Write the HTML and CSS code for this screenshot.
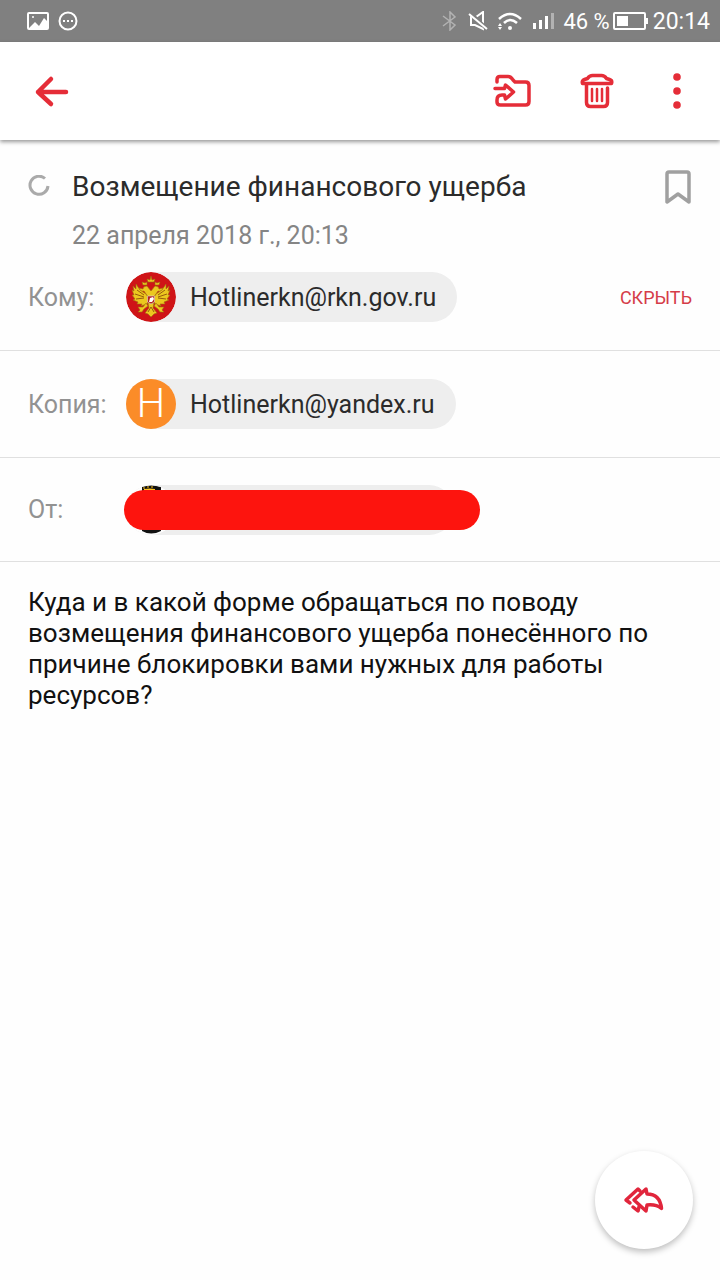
FILE: index.html
```html
<!DOCTYPE html>
<html lang="ru">
<head>
  <meta charset="UTF-8">
  <meta name="viewport" content="width=device-width, initial-scale=1.0">
  <title>Возмещение финансового ущерба</title>
  <link rel="stylesheet" href="styles.css">
</head>
<body>
  <div class="status-bar">
    <svg width="22" height="20" viewBox="0 0 22 20" fill="none" stroke="#fff" stroke-width="2">
      <rect x="1" y="2" width="20" height="16" rx="1"/>
      <path d="M2 17l6-6 4 4 5-8 4 4v6z" fill="#fff" stroke="none"/>
      <circle cx="6" cy="6" r="1" fill="#fff" stroke="none"/>
    </svg>
    <svg class="chat-icon" width="20" height="20" viewBox="0 0 20 20" fill="none" stroke="#fff" stroke-width="2">
      <circle cx="10" cy="10" r="8.5"/>
      <path d="M5 10h2M9 10h2M13 10h2"/>
    </svg>
    <div class="status-right">
      <svg width="16" height="20" viewBox="0 0 16 20" fill="none" stroke="#b2b2b2" stroke-width="1.5">
        <path d="M1 5l12 9-5 5V1l5 5-12 9"/>
      </svg>
      <svg class="mute-icon" width="20" height="20" viewBox="0 0 20 20" fill="none" stroke="#fff" stroke-width="2">
        <path d="M8 6l7-5v17l-8-4H3V5"/>
        <path d="M1 1l18 17" stroke="#808080" stroke-width="4"/>
        <path d="M1 3l18 15"/>
      </svg>
      <svg class="wifi-icon" width="26" height="20" viewBox="0 0 26 20" fill="none" stroke="#fff" stroke-width="2.5">
        <path d="M2 8q11-10 22 0M7 12q6-6 13 0"/>
        <circle cx="13" cy="17" r="2" fill="#fff" stroke="none"/>
        <path d="M1 15l2-3 2 3zM1 16l2 3 2-3z" fill="#fff" stroke="none"/>
      </svg>
      <svg class="signal-icon" width="22" height="18" viewBox="0 0 22 18" fill="#fff">
        <path d="M0 11h3v6H0zM6 8h3v9H6zM12 4h3v13h-3z"/>
        <path d="M18 1h3v16h-3z" fill="#b2b2b2"/>
      </svg>
      <span class="percent">46 %</span>
      <svg width="36" height="18" viewBox="0 0 36 18" fill="none" stroke="#fff" stroke-width="2">
        <rect x="1" y="1" width="31" height="16" rx="1"/>
        <path d="M4 4h11v10H4zM33 6h2v6h-2z" fill="#fff" stroke="none"/>
      </svg>
      <span class="clock">20:14</span>
    </div>
  </div>

  <header class="toolbar">
    <button type="button" class="icon-btn" aria-label="Назад">
      <svg width="40" height="40" viewBox="0 0 40 40" fill="none" stroke="#e52d38" stroke-width="4.5" stroke-linecap="round" stroke-linejoin="round">
        <path d="M34 21H6M19 8L6 21l13 12"/>
      </svg>
    </button>
    <div class="toolbar-actions">
      <button type="button" class="icon-btn" aria-label="Переместить в папку">
        <svg width="40" height="40" viewBox="0 0 40 40" fill="none" stroke="#e52d38" stroke-width="3.5" stroke-linecap="round" stroke-linejoin="round">
          <path d="M6 11V8.500q0-3 3-3h8q3 0 5 3.500l2 2h10.500q3.500 0 3.500 3.500v16q0 3.500-3.500 3.500H9.500Q6 34 6 31v-2q0-5 5-5h2.500l1 4 8-7-8-7-1 3.500H4"/>
        </svg>
      </button>
      <button type="button" class="icon-btn" aria-label="Удалить">
        <svg width="40" height="40" viewBox="0 0 40 40" fill="none" stroke="#e52d38" stroke-width="3.5" stroke-linecap="round" stroke-linejoin="round">
          <path d="M8.500 12.500q-1-3 2-4l3-1q2-3 5-3h9q3 0 5 3l3 1q3 1 2 4z"/>
          <path d="M12.500 13v18.500q0 4 4 4h13q4 0 4-4V17"/>
          <path d="M18 18v12M23 18v12M28 18v12" stroke-width="2.5"/>
        </svg>
      </button>
      <button type="button" class="icon-btn" aria-label="Ещё">
        <svg width="40" height="40" viewBox="0 0 40 40" fill="#e52d38">
          <circle cx="20" cy="6" r="3.800"/><circle cx="20" cy="20" r="3.800"/><circle cx="20" cy="34" r="3.800"/>
        </svg>
      </button>
    </div>
  </header>

  <main>
    <section class="subject">
      <svg class="spinner" width="22" height="22" viewBox="0 0 22 22" fill="none" stroke="#aaa" stroke-width="3">
        <path d="M17 3.500A9 9 0 1 0 20 11"/>
      </svg>
      <div class="subject-text">
        <h1>Возмещение финансового ущерба</h1>
        <p class="date">22 апреля 2018 г., 20:13</p>
      </div>
      <button type="button" class="icon-btn" aria-label="Отметить">
        <svg width="28" height="36" viewBox="0 0 28 36" fill="none" stroke="#a0a0a0" stroke-width="3.5" stroke-linejoin="round">
          <path d="M3 5q0-2 2-2h18q2 0 2 2v28l-11-8-11 8z"/>
        </svg>
      </button>
    </section>

    <div class="row row-to">
      <span class="label">Кому:</span>
      <span class="chip">
        <svg class="avatar" viewBox="0 0 50 50">
          <circle cx="25" cy="25" r="25" fill="#cf1417"/>
          <g fill="#ecc81f" stroke="#a06c12" stroke-width=".6">
            <path d="M22 25L18 19q-4 1-5-3l4 1q0-3 4-3l4 5 4-5q4 0 4 3l4-1q-1 4-5 3l-4 6z"/>
            <path d="M20 22l-6-4-4-6 0 5-3-3 1 5-2-1 2 5-2 0 3 4-2 1 5 2-1 2 5 0-1 2 6-2 2-5z"/>
            <path d="M30 22l6-4 4-6 0 5 3-3-1 5 2-1-2 5 2 0-3 4 2 1-5 2 1 2-5 0 1 2-6-2-2-5z"/>
            <path d="M20 31l-3 4-5 0 2 3-2 2h4l2-3 4-3zM30 31l3 4 5 0-2 3 2 2h-4l-2-3-4-3z"/>
            <path d="M22 31h6l-1 5 4 5-3 1-3 3-3-3-3-1 4-5z"/>
            <path d="M22 10l-1-3 3 1 1-4 1 4 3-1-1 3zM17 13l-1-3 3 1 2-1v3zM29 13v-3l2 1 3-1-1 3z"/>
          </g>
          <path d="M11 18l7 5M9 22l9 3M10 27l8-1M39 18l-7 5M41 22l-9 3M40 27l-8-1M22 40l3-5 3 5" fill="none" stroke="#985b0d"/>
          <path d="M21.500 24h7v6l-3.500 2-3.500-2z" fill="#b6251e" stroke="#ddd" stroke-width=".6"/>
          <path d="M23 30l1-4 3-1 1 2-2 3z" fill="#fff"/>
        </svg>
        <span>Hotlinerkn@rkn.gov.ru</span>
      </span>
      <button type="button" class="hide-btn">СКРЫТЬ</button>
    </div>

    <div class="row">
      <span class="label">Копия:</span>
      <span class="chip">
        <span class="avatar letter">H</span>
        <span>Hotlinerkn@yandex.ru</span>
      </span>
    </div>

    <div class="row row-from">
      <span class="label">От:</span>
      <span class="chip chip-hidden">
        <svg class="avatar" viewBox="0 0 50 50">
          <circle cx="25" cy="25" r="25" fill="#fefefe"/>
          <path d="M16 2q9-3 19 0v6H16z" fill="#111"/>
          <path d="M18 4q6-1 11 0v3H18z" fill="#ffc321"/>
          <path d="M18 2v2M22 1v2M26 1v2" stroke="#ffc321"/>
          <path d="M16 42h19v4q-10 5-19 0z" fill="#111"/>
        </svg>
        <span class="redaction"></span>
      </span>
    </div>

    <p class="message">Куда и в какой форме обращаться по поводу возмещения финансового ущерба понесённого по причине блокировки вами нужных для работы ресурсов?</p>
  </main>

  <button type="button" class="fab" aria-label="Ответить всем">
    <svg width="44" height="32" viewBox="0 0 44 32" fill="none" stroke="#e1263c" stroke-width="3.5" stroke-linejoin="round" stroke-linecap="round">
      <path d="M24 5l1 5q13 0 14.500 14.500Q34 20 25 21l-1 6-12-11z"/>
      <path d="M18 7l-2-2L4 16l4 3M11 23l5 4 1-4"/>
    </svg>
  </button>
</body>
</html>
```
FILE: styles.css
```css
* {
  box-sizing: border-box;
}

body {
  margin: 0;
  background: #fefefe;
  color: #2b2b2b;
  font-family: Roboto, "Noto Sans", sans-serif;
  font-size: 25px;
}

svg {
  display: block;
  flex-shrink: 0;
}

button {
  padding: 0;
  border: none;
  background: none;
  font-family: inherit;
  cursor: pointer;
}

.status-bar {
  display: flex;
  align-items: center;
  height: 42px;
  padding: 0 10px 0 27px;
  background: #808080;
  color: #fff;
  font-size: 23px;
}

.chat-icon {
  margin-left: 9px;
}

.status-right {
  display: flex;
  align-items: center;
  margin-left: auto;
}

.mute-icon {
  margin-left: 10px;
}

.wifi-icon {
  margin-left: 9px;
}

.signal-icon {
  margin: 0 8px 0 10px;
}

.percent {
  margin-right: 3px;
  font-size: 22px;
}

.clock {
  margin-left: 4px;
}

.toolbar {
  display: flex;
  align-items: center;
  justify-content: space-between;
  height: 98px;
  padding: 0 23px 0 32px;
  background: #fff;
  box-shadow: 0 2px 4px rgba(0, 0, 0, 0.4);
}

.toolbar-actions {
  display: flex;
  gap: 43px;
}

.subject {
  display: flex;
  align-items: flex-start;
  padding: 29px 28px 0;
}

.spinner {
  margin: 6px 22px 0 0;
}

.subject-text {
  flex: 1;
}

h1 {
  margin: 0;
  font-size: 28px;
  font-weight: 400;
  line-height: 36px;
}

.date {
  margin: 17px 0 0;
  color: #858585;
  line-height: 28px;
}

.row {
  display: flex;
  align-items: center;
  height: 107px;
  padding: 0 28px;
  border-bottom: 1px solid #e0e0e0;
}

.row-to {
  height: 101px;
  padding-bottom: 6px;
}

.row-from {
  height: 104px;
}

.label {
  width: 98px;
  color: #929292;
}

.chip {
  display: flex;
  align-items: center;
  gap: 14px;
  height: 50px;
  padding-right: 21px;
  border-radius: 25px;
  background: #eee;
}

.avatar {
  width: 50px;
  height: 50px;
  border-radius: 50%;
}

.letter {
  background: #fb8c28;
  color: #fff;
  font-size: 40px;
  font-weight: 300;
  line-height: 50px;
  text-align: center;
}

.hide-btn {
  margin-left: auto;
  color: #d53c48;
  font-size: 18px;
}

.chip-hidden {
  position: relative;
  width: 328px;
}

/* covers the sender's address */
.redaction {
  position: absolute;
  top: 5px;
  left: -2px;
  width: 356px;
  height: 40px;
  border-radius: 20px;
  background: #fd140e;
}

.message {
  margin: 0;
  padding: 25px 28px;
  color: #111;
  font-size: 26px;
  line-height: 31px;
}

.fab {
  position: fixed;
  right: 27px;
  bottom: 31px;
  display: flex;
  align-items: center;
  justify-content: center;
  width: 98px;
  height: 98px;
  border-radius: 50%;
  background: #fff;
  box-shadow: 0 3px 6px rgba(0, 0, 0, 0.25);
}
```
